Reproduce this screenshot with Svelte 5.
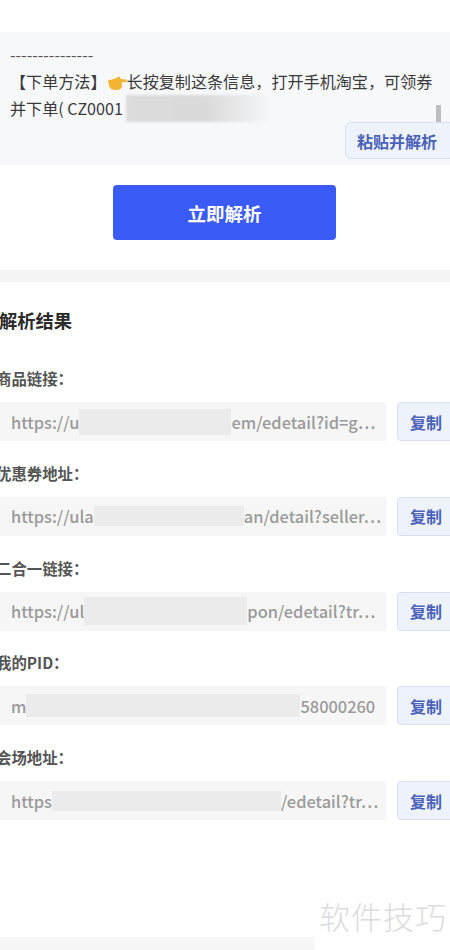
<script>
	const results = [
		{ label: '商品链接：', head: 'https://u', mask: 152, maskH: 26, tail: 'em/edetail?id=g⋯' },
		{ label: '优惠券地址：', head: 'https://ula', mask: 150, maskH: 20, tail: 'an/detail?seller⋯' },
		{ label: '二合一链接：', head: 'https://ul', mask: 163, maskH: 28, tail: 'pon/edetail?tr⋯' },
		{ label: '我的PID：', head: 'm', mask: 274, maskH: 23, tail: '58000260' },
		{ label: '会场地址：', head: 'https', mask: 229, maskH: 20, tail: '/edetail?tr⋯' }
	];
</script>

<div class="page">
	<section class="input-card">
		<p class="dashes">---------------</p>
		<p class="message">
			【下单方法】<svg class="hand" viewBox="0 0 20 18" aria-hidden="true">
				<path d="M1 7.5 C5 6.5 8 6 10 4.5 C11 3.5 12 3 13 4 L13.5 6 L19 6.5 C20 7 20 8.5 19 9 L14.5 9.5 L15 14 C14.5 16 12 17 9 17 C5 17 2 15 2 12 Z" fill="#f2b431" />
			</svg>长按复制这条信息，打开手机淘宝，可领券并下单( CZ0001 <span class="blur-patch"></span>
		</p>
		<span class="scroll-thumb"></span>
		<button class="paste">粘贴并解析</button>
	</section>

	<div class="submit-wrap">
		<button class="submit">立即解析</button>
	</div>

	<div class="divider"></div>

	<section class="results">
		<h2>解析结果</h2>
		{#each results as row}
			<div class="field">
				<div class="field-label">{row.label}</div>
				<div class="field-row">
					<div class="field-value">{row.head}<span class="mask" style="width: {row.mask}px; height: {row.maskH}px"></span>{row.tail}</div>
					<button class="copy">复制</button>
				</div>
			</div>
		{/each}
	</section>

	<div class="watermark">软件技巧</div>
	<div class="bottom-strip"></div>
</div>

<style>
	:global(body) {
		background: #fff;
		overflow: hidden;
	}

	.page {
		position: relative;
		width: 450px;
		height: 950px;
		overflow: hidden;
		padding-top: 32px;
		box-sizing: border-box;
		font-family: "Noto Sans CJK SC", "Noto Sans", sans-serif;
		color: #333;
	}

	p {
		margin: 0;
	}

	button {
		font-family: inherit;
		cursor: pointer;
	}

	.input-card {
		position: relative;
		height: 133px;
		box-sizing: border-box;
		padding: 9px 10px 0;
		background: #f7f8fa;
		font-size: 16.1px;
		line-height: 27px;
	}

	.dashes {
		font-size: 16px;
		color: #555;
	}

	.message {
		width: 432px;
		color: #3a3a3a;
	}

	.hand {
		width: 20px;
		height: 18px;
		vertical-align: -3px;
	}

	.blur-patch {
		display: inline-block;
		width: 146px;
		height: 27px;
		vertical-align: top;
		background: linear-gradient(90deg, #dcdcdc, #dadada 55%, #f7f8fa);
		filter: blur(1px);
	}

	.scroll-thumb {
		position: absolute;
		left: 436px;
		top: 73px;
		width: 5px;
		height: 17px;
		background: #bdbdbd;
	}

	.paste {
		position: absolute;
		left: 345px;
		top: 90px;
		width: 110px;
		height: 37px;
		padding: 0 17px 0 11px;
		text-align: left;
		white-space: nowrap;
		font-size: 16px;
		font-weight: 700;
		color: #4a62b8;
		background: #eef2fb;
		border: 1px solid #d8dff0;
		border-radius: 6px;
	}

	.submit-wrap {
		display: flex;
		justify-content: center;
		padding: 20px 1px 30px 0;
	}

	.submit {
		width: 223px;
		height: 55px;
		border: 0;
		border-radius: 4px;
		background: #3b5bf6;
		color: #fff;
		font-size: 18.5px;
		font-weight: 700;
	}

	.divider {
		height: 12px;
		background: #f4f4f4;
	}

	.results {
		margin-left: -1px;
	}

	h2 {
		margin: 25px 0 0;
		font-size: 18.3px;
		line-height: 26px;
		font-weight: 700;
		color: #2b2b2b;
	}

	.field {
		margin-top: 19.75px;
	}

	.results h2 + .field {
		margin-top: 33px;
	}

	.field-label {
		margin-left: -3px;
		font-size: 15.4px;
		line-height: 24px;
		font-weight: 700;
		color: #555;
	}

	.field-row {
		display: flex;
		gap: 10px;
		width: 480px;
		margin-top: 12px;
	}

	.field-value {
		width: 388px;
		height: 39px;
		box-sizing: border-box;
		padding-left: 12px;
		display: flex;
		align-items: center;
		white-space: pre;
		overflow: hidden;
		background: #f6f6f6;
		font-size: 16.4px;
		font-weight: 500;
		color: #9a9a9a;
		border-radius: 0 3px 3px 0;
	}

	.mask {
		flex: none;
		background: #ebebeb;
		filter: blur(0.6px);
	}

	.copy {
		width: 70px;
		height: 39px;
		padding: 0;
		text-align: left;
		text-indent: 12px;
		font-size: 16px;
		font-weight: 700;
		color: #4a62b8;
		background: #eef2fb;
		border: 1px solid #d8dff0;
		border-radius: 4px;
	}

	.watermark {
		position: absolute;
		left: 319px;
		top: 896px;
		font-size: 31px;
		line-height: 40px;
		font-weight: 300;
		letter-spacing: 1px;
		color: #dcdcdc;
		white-space: nowrap;
	}

	.bottom-strip {
		position: absolute;
		left: 0;
		bottom: 0;
		width: 315px;
		height: 13px;
		background: #f7f7f7;
	}
</style>
